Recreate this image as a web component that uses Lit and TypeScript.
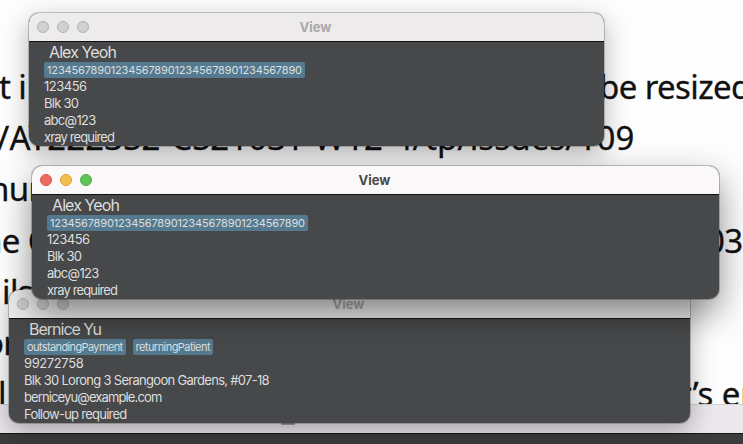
import { LitElement, html, css } from "lit";
import { customElement, property } from "lit/decorators.js";
import { styleMap } from "lit/directives/style-map.js";

interface Line { text: string; tracking: number; }

@customElement("view-window")
class ViewWindow extends LitElement {
  @property({ attribute: false }) name: Line = { text: "", tracking: 0 };
  @property({ attribute: false }) tags: Line[] = [];
  @property({ attribute: false }) lines: Line[] = [];
  @property({ type: Boolean, reflect: true }) active = false;

  static styles = css`
    :host {
      display: block;
      box-sizing: border-box;
      height: 133px;
      border-radius: 10px;
      overflow: hidden;
      background: #474849;
      color: #dededf;
      font-family: Inter, "Liberation Sans", sans-serif;
      box-shadow: 0 0 0 1px rgba(0, 0, 0, 0.2), 0 8px 26px rgba(0, 0, 0, 0.3);
    }
    :host([active]) {
      box-shadow: 0 0 0 1px rgba(0, 0, 0, 0.22), 0 14px 34px 0 rgba(0, 0, 0, 0.46);
    }
    .bar {
      display: grid;
      grid-template-columns: 1fr auto 1fr;
      align-items: center;
      height: 28px;
      background: #edebec;
      border-bottom: 1px solid #111;
    }
    :host([active]) .bar { background: #faf8f9; }
    .dots { display: flex; gap: 8px; padding-left: 8px; }
    .dot {
      box-sizing: border-box;
      width: 12px;
      height: 12px;
      border-radius: 50%;
      background: #d1cfd1;
      border: 1px solid #b4b2b4;
    }
    :host([active]) .red { background: #ec6a5f; border-color: #d5564b; }
    :host([active]) .amber { background: #f5bf4f; border-color: #d8a13c; }
    :host([active]) .green { background: #61c555; border-color: #4eaa41; }
    .title { padding-right: 2px; font-size: 13px; font-weight: 700; line-height: 28px; color: #aaa8a9; }
    :host([active]) .title { color: #4a494a; }
    .body { padding-left: 15px; }
    .name { height: 20px; padding-left: 5px; font-size: 16px; line-height: 21px; white-space: nowrap; }
    .tags { display: flex; gap: 7px; height: 16px; }
    .tag {
      box-sizing: border-box;
      padding: 0 3px;
      border-radius: 2px;
      background: #557a8f;
      font-size: 11px;
      line-height: 16px;
      white-space: nowrap;
    }
    .row { height: 17px; font-size: 13px; line-height: 17px; white-space: nowrap; }
  `;

  private text(line: Line) {
    return html`<span style=${styleMap({ letterSpacing: `${line.tracking}px` })}>${line.text}</span>`;
  }

  render() {
    return html`
      <div class="bar">
        <div class="dots">
          <span class="dot red"></span><span class="dot amber"></span><span class="dot green"></span>
        </div>
        <div class="title">View</div>
        <div></div>
      </div>
      <div class="body">
        <div class="name">${this.text(this.name)}</div>
        <div class="tags">${this.tags.map((t) => html`<div class="tag">${this.text(t)}</div>`)}</div>
        ${this.lines.map((l) => html`<div class="row">${this.text(l)}</div>`)}
      </div>
    `;
  }
}

const page = [
  [{ text: "t i", x: -1, tracking: -0.6 }, { text: "be resized", x: 599, tracking: -0.6 }],
  [{ text: "/AY2223S2-CS2103T-W12-4/tp/issues/109", x: -3, tracking: 0.1 }],
  [{ text: "nur", x: -11, tracking: -0.6 }],
  [{ text: "ne C", x: -18, tracking: -0.6 }, { text: "03", x: 706, tracking: -0.6 }],
  [{ text: "ils", x: 2, tracking: -0.6 }],
  [{ text: "or", x: -16, tracking: -0.6 }],
  [{ text: "l", x: -2, tracking: -0.6 }, { text: "r’s en", x: 678, tracking: -0.1 }],
];

const alex = {
  name: { text: "Alex Yeoh", tracking: -0.9 },
  tags: [{ text: "1234567890123456789012345678901234567890", tracking: -0.15 }],
  lines: [
    { text: "123456", tracking: -0.5 },
    { text: "Blk 30", tracking: -0.75 },
    { text: "abc@123", tracking: -0.7 },
    { text: "xray required", tracking: -0.87 },
  ],
};

const bernice = {
  name: { text: "Bernice Yu", tracking: -1 },
  tags: [
    { text: "outstandingPayment", tracking: -0.62 },
    { text: "returningPatient", tracking: -0.55 },
  ],
  lines: [
    { text: "99272758", tracking: -0.4 },
    { text: "Blk 30 Lorong 3 Serangoon Gardens, #07-18", tracking: -0.7 },
    { text: "berniceyu@example.com", tracking: -0.88 },
    { text: "Follow-up required", tracking: -0.75 },
  ],
};

@customElement("app-root")
class AppRoot extends LitElement {
  static styles = css`
    :host {
      display: block;
      position: relative;
      width: 743px;
      height: 444px;
      overflow: hidden;
      background: #fdfdfd;
    }
    .desktop { display: flex; flex-direction: column; height: 444px; }
    .page {
      height: 404px;
      padding-top: 61px;
      box-sizing: border-box;
      overflow: hidden;
      color: #111;
      font: 33px/51px "Noto Sans", "Open Sans", sans-serif;
      -webkit-text-stroke: 0.3px #111;
    }
    .line { display: grid; height: 51.2px; white-space: pre; }
    .frag { grid-area: 1 / 1; width: max-content; }
    .footer {
      flex: none;
      height: 30px;
      box-sizing: border-box;
      background: #ece6ed;
      border-top: 1px solid #d2d0d2;
      border-bottom: 1px solid #151515;
      padding: 17px 0 0 281px;
    }
    .mark { width: 14px; height: 3px; border-radius: 1px; background: #a3a1a5; }
    .strip { flex: 1; background: #3d3c3d; }
    view-window { position: absolute; }
    .third { left: 9px; top: 290px; width: 681px; }
    .first { left: 29px; top: 13px; width: 575px; }
    .second { left: 32px; top: 166px; width: 687px; }
  `;

  render() {
    return html`
      <div class="desktop">
        <div class="page">
          ${page.map((l) => html`<div class="line">
            ${l.map((f) => html`<span class="frag" style=${styleMap({ marginLeft: `${f.x}px`, letterSpacing: `${f.tracking}px` })}>${f.text}</span>`)}
          </div>`)}
        </div>
        <div class="footer"><div class="mark"></div></div>
        <div class="strip"></div>
      </div>
      <view-window class="third" .name=${bernice.name} .tags=${bernice.tags} .lines=${bernice.lines}></view-window>
      <view-window class="first" .name=${alex.name} .tags=${alex.tags} .lines=${alex.lines}></view-window>
      <view-window class="second" active .name=${alex.name} .tags=${alex.tags} .lines=${alex.lines}></view-window>
    `;
  }
}
